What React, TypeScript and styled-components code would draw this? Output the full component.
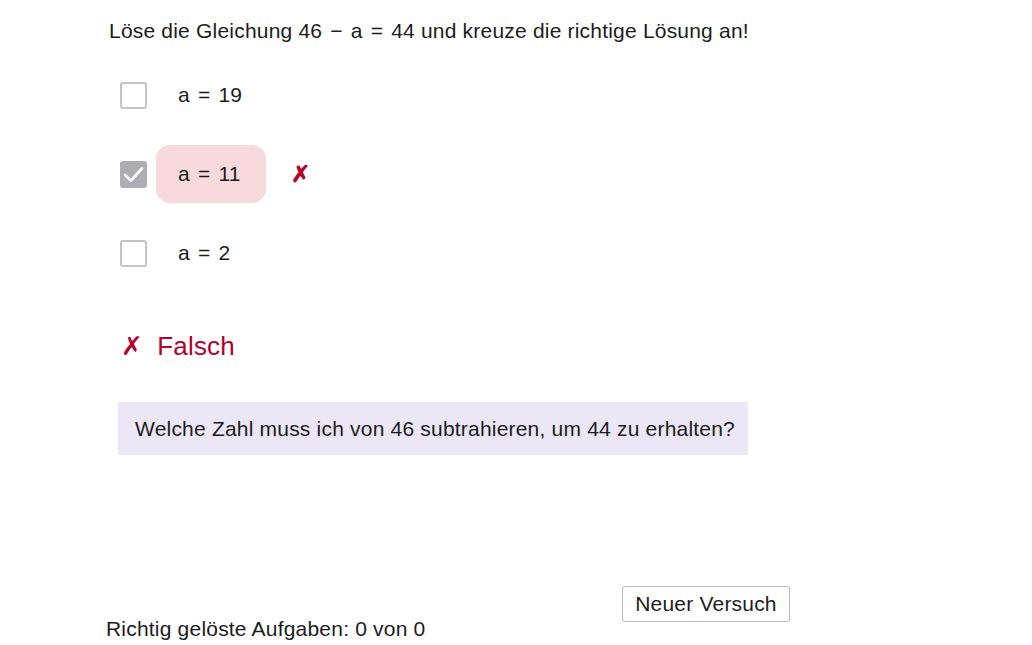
import React from "react";
import styled, { createGlobalStyle } from "styled-components";

const Global = createGlobalStyle`
  html, body { margin: 0; padding: 0; background: #fff; }
  body {
    font-family: "Liberation Sans", Arial, sans-serif;
    color: #1c1c1c;
    letter-spacing: 0.2px;
  }
`;

const Page = styled.div`
  width: 1032px;
  height: 645px;
  display: flex;
  flex-direction: column;
  padding: 17px 0 0 109px;
  box-sizing: border-box;
`;

const Prompt = styled.div`
  font-size: 21px;
  line-height: 28px;
`;

/* operators in the formulas get a little room, as typeset maths does */
const Op = styled.span`
  margin: 0 2px;
`;

const Formula = styled.span`
  white-space: pre;
`;

const Options = styled.div`
  display: flex;
  flex-direction: column;
  gap: 21px;
  margin-top: 21px;
  padding-left: 11px;
`;

const Row = styled.label`
  display: flex;
  align-items: center;
  height: 58px;
  font-size: 21px;
`;

const Box = styled.span<{ $checked?: boolean }>`
  width: 27px;
  height: 27px;
  box-sizing: border-box;
  border-radius: 3px;
  border: 2px solid ${(p) => (p.$checked ? "#aeadb3" : "#c4c4c6")};
  background: ${(p) => (p.$checked ? "#aeadb3" : "#fff")};
  display: flex;
  align-items: center;
  justify-content: center;
  flex-shrink: 0;
`;

const Label = styled.span<{ $wrong?: boolean }>`
  margin-left: 9px;
  height: 58px;
  padding: 0 25px 0 22px;
  display: flex;
  align-items: center;
  border-radius: 14px;
  background: ${(p) => (p.$wrong ? "#f8d9dc" : "transparent")};
`;

const Mark = styled.span`
  color: #b3002d;
  font-size: 23px;
  font-weight: bold;
  margin-left: 25px;
`;

const Verdict = styled.div`
  margin-top: 49px;
  margin-left: 12px;
  color: #b3002d;
  font-size: 26px;
  line-height: 30px;
  display: flex;
  align-items: center;
  gap: 14px;
`;

const Hint = styled.div`
  margin-top: 41px;
  margin-left: 9px;
  width: 630px;
  height: 53px;
  box-sizing: border-box;
  background: #ebe7f6;
  padding-left: 17px;
  display: flex;
  align-items: center;
  font-size: 21px;
`;

const Footer = styled.div`
  margin-top: auto;
  margin-left: -3px;
  width: 684px;
  height: 59px;
  display: flex;
  align-items: flex-end;
  justify-content: space-between;
  padding-bottom: 4px;
  box-sizing: border-box;
`;

const Score = styled.div`
  font-size: 21px;
`;

const Button = styled.button`
  align-self: flex-start;
  font-family: inherit;
  letter-spacing: inherit;
  font-size: 21px;
  color: #1c1c1c;
  background: #fff;
  border: 1px solid #b9b9b9;
  border-radius: 3px;
  height: 36px;
  width: 168px;
  padding: 0;
`;

const Check = () => (
  <svg width="21" height="17" viewBox="0 0 21 17">
    <path d="M2 9 L8 14.5 L19 2.5" fill="none" stroke="#fff" strokeWidth="2.6" strokeLinecap="round" strokeLinejoin="round" />
  </svg>
);

const Eq = ({ value }: { value: string }) => (
  <Formula>
    {"a "}
    <Op>=</Op>
    {" " + value}
  </Formula>
);

export default function App() {
  return (
    <>
      <Global />
      <Page>
        <Prompt>
          Löse die Gleichung 46 <Op>−</Op> a <Op>=</Op> 44 und kreuze die richtige Lösung an!
        </Prompt>
        <Options>
          <Row>
            <Box />
            <Label>
              <Eq value="19" />
            </Label>
          </Row>
          <Row>
            <Box $checked>
              <Check />
            </Box>
            <Label $wrong>
              <Eq value="11" />
            </Label>
            <Mark>✗</Mark>
          </Row>
          <Row>
            <Box />
            <Label>
              <Eq value="2" />
            </Label>
          </Row>
        </Options>
        <Verdict>
          <span>✗</span>
          <span>Falsch</span>
        </Verdict>
        <Hint>Welche Zahl muss ich von 46 subtrahieren, um 44 zu erhalten?</Hint>
        <Footer>
          <Score>Richtig gelöste Aufgaben: 0 von 0</Score>
          <Button>Neuer Versuch</Button>
        </Footer>
      </Page>
    </>
  );
}
